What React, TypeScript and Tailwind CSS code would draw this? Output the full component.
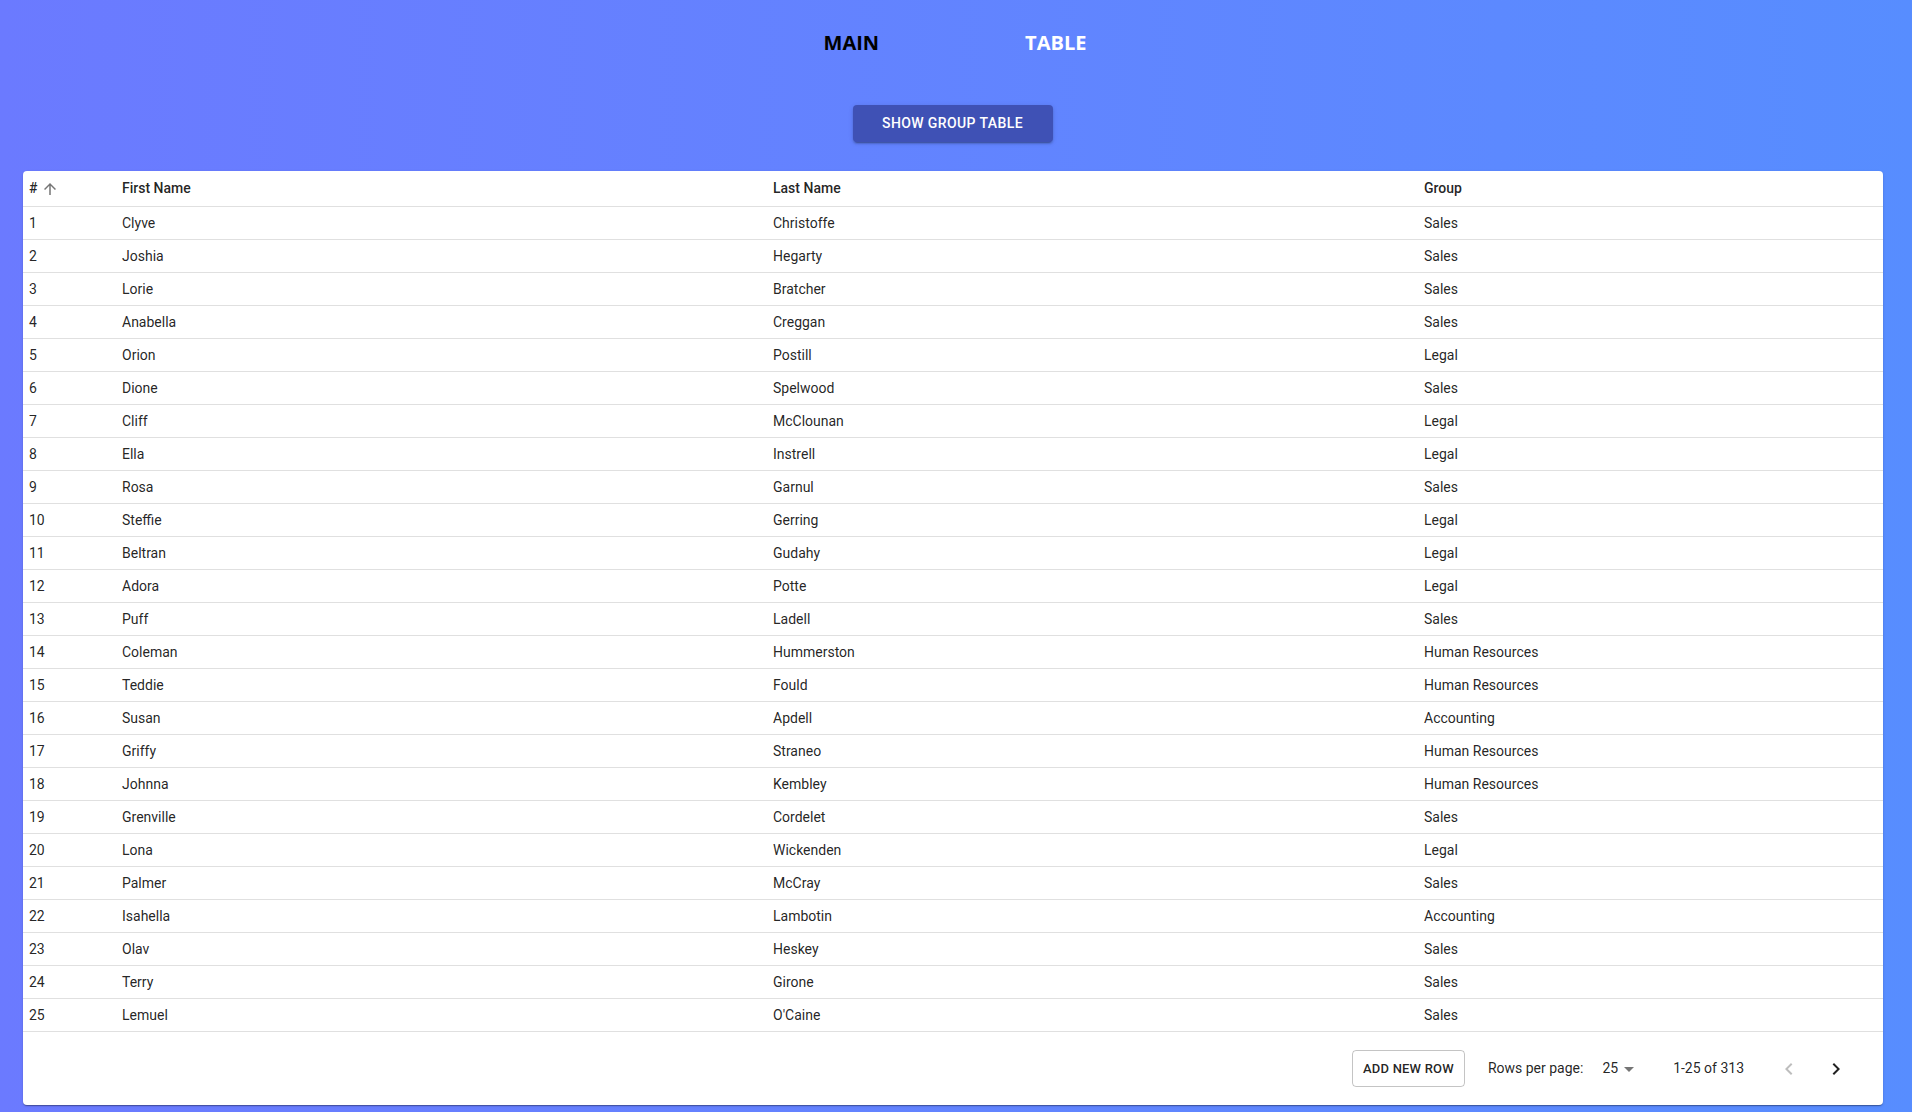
import React from "react";

const rows: [string, string, string][] = [
  ["Clyve", "Christoffe", "Sales"],
  ["Joshia", "Hegarty", "Sales"],
  ["Lorie", "Bratcher", "Sales"],
  ["Anabella", "Creggan", "Sales"],
  ["Orion", "Postill", "Legal"],
  ["Dione", "Spelwood", "Sales"],
  ["Cliff", "McClounan", "Legal"],
  ["Ella", "Instrell", "Legal"],
  ["Rosa", "Garnul", "Sales"],
  ["Steffie", "Gerring", "Legal"],
  ["Beltran", "Gudahy", "Legal"],
  ["Adora", "Potte", "Legal"],
  ["Puff", "Ladell", "Sales"],
  ["Coleman", "Hummerston", "Human Resources"],
  ["Teddie", "Fould", "Human Resources"],
  ["Susan", "Apdell", "Accounting"],
  ["Griffy", "Straneo", "Human Resources"],
  ["Johnna", "Kembley", "Human Resources"],
  ["Grenville", "Cordelet", "Sales"],
  ["Lona", "Wickenden", "Legal"],
  ["Palmer", "McCray", "Sales"],
  ["Isahella", "Lambotin", "Accounting"],
  ["Olav", "Heskey", "Sales"],
  ["Terry", "Girone", "Sales"],
  ["Lemuel", "O'Caine", "Sales"],
];

const grid = "grid grid-cols-[93px_651px_651px_1fr]";

export default function App() {
  return (
    <div
      className="min-h-screen w-full bg-gradient-to-r from-[#6b7aff] to-[#578dff] pb-[7px]"
      style={{ fontFamily: "Roboto, 'Liberation Sans', sans-serif" }}
    >
      <div className="flex justify-center gap-[146px] pt-[29px] pr-[2px]">
        <span
          className="text-[20px] leading-[28px] font-bold text-black"
          style={{ fontFamily: "'Open Sans', 'Liberation Sans', sans-serif" }}
        >
          MAIN
        </span>
        <span
          className="text-[20px] leading-[28px] font-bold text-white"
          style={{ fontFamily: "'Open Sans', 'Liberation Sans', sans-serif" }}
        >
          TABLE
        </span>
      </div>

      <div className="flex justify-center mt-[48px]">
        <button className="h-[37px] w-[200px] rounded-[4px] bg-[#3f51b5] text-white text-[14px] font-medium tracking-[0.4px] uppercase shadow-[0_3px_1px_-2px_rgba(0,0,0,0.2),0_2px_2px_0_rgba(0,0,0,0.14),0_1px_5px_0_rgba(0,0,0,0.12)] mr-[7px]">
          Show Group Table
        </button>
      </div>

      <div className="mt-[29px] ml-[23px] mr-[29px] rounded-[4px] bg-white shadow-[0_2px_1px_-1px_rgba(0,0,0,0.2),0_1px_1px_0_rgba(0,0,0,0.14),0_1px_3px_0_rgba(0,0,0,0.12)] text-[14px] text-[rgba(0,0,0,0.87)]">
        <div className={`${grid} h-[36px] items-center border-b border-[#e0e0e0] font-medium`}>
          <div className="pl-[6px] flex items-center">
            <span>#</span>
            <svg width="18" height="18" viewBox="0 0 24 24" className="ml-[4px]" fill="rgba(0,0,0,0.54)">
              <path d="M4 12l1.41 1.41L11 7.83V20h2V7.83l5.58 5.59L20 12l-8-8-8 8z" />
            </svg>
          </div>
          <div className="pl-[6px]">First Name</div>
          <div className="pl-[6px]">Last Name</div>
          <div className="pl-[6px]">Group</div>
        </div>
        {rows.map((r, i) => (
          <div key={i} className={`${grid} h-[33px] items-center border-b border-[#e0e0e0]`}>
            <div className="pl-[6px]">{i + 1}</div>
            <div className="pl-[6px]">{r[0]}</div>
            <div className="pl-[6px]">{r[1]}</div>
            <div className="pl-[6px]">{r[2]}</div>
          </div>
        ))}
        <div className="h-[73px] flex items-center justify-end pr-[35px]">
          <button className="h-[37px] px-[10px] rounded-[4px] border border-[rgba(0,0,0,0.23)] text-[13px] font-medium uppercase text-[rgba(0,0,0,0.87)] tracking-[0.2px]">
            Add New Row
          </button>
          <span className="ml-[23px] text-[14px]">Rows per page:</span>
          <span className="ml-[19px] flex items-center">
            <span className="text-[14px]">25</span>
            <svg width="24" height="24" viewBox="0 0 24 24" fill="rgba(0,0,0,0.54)" className="ml-[-1px]">
              <path d="M7 10l5 5 5-5z" />
            </svg>
          </span>
          <span className="ml-[32px] text-[14px]">1-25 of 313</span>
          <div className="ml-[33px] flex items-center gap-[23px]">
            <svg width="24" height="24" viewBox="0 0 24 24" fill="rgba(0,0,0,0.26)">
              <path d="M15.41 7.41L14 6l-6 6 6 6 1.41-1.41L10.83 12z" />
            </svg>
            <svg width="24" height="24" viewBox="0 0 24 24" fill="rgba(0,0,0,0.87)">
              <path d="M10 6L8.59 7.41 13.17 12l-4.58 4.59L10 18l6-6z" />
            </svg>
          </div>
        </div>
      </div>
    </div>
  );
}
